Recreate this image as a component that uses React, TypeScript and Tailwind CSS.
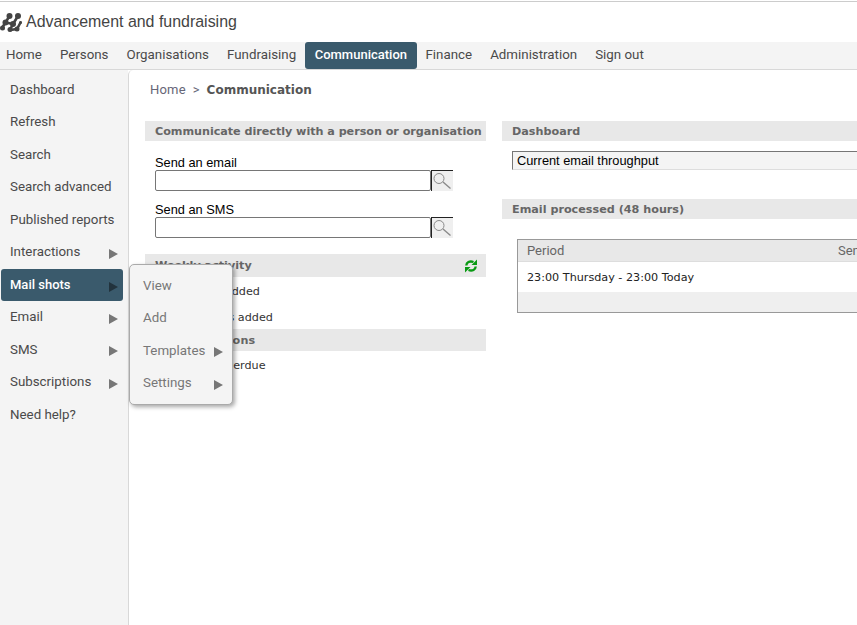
const topNav = ["Home", "Persons", "Organisations", "Fundraising", "Communication", "Finance", "Administration", "Sign out"];

const sideNav = [
  { label: "Dashboard" },
  { label: "Refresh" },
  { label: "Search" },
  { label: "Search advanced" },
  { label: "Published reports" },
  { label: "Interactions", arrow: true },
  { label: "Mail shots", arrow: true, active: true },
  { label: "Email", arrow: true },
  { label: "SMS", arrow: true },
  { label: "Subscriptions", arrow: true },
  { label: "Need help?" },
];

const subMenu = [
  { label: "View" },
  { label: "Add" },
  { label: "Templates", arrow: true },
  { label: "Settings", arrow: true },
];

function Arrow({ className }: { className?: string }) {
  return (
    <svg width="9" height="10" viewBox="0 0 9 10" className={`mt-[3px] ${className ?? ""}`}>
      <path d="M0 0 L9 5 L0 10 Z" fill="currentColor" />
    </svg>
  );
}

function Logo() {
  return (
    <svg width="22" height="20" viewBox="0 0 22 20" className="shrink-0">
      <g stroke="#444444" strokeWidth="2.6" strokeLinecap="round" fill="none">
        <path d="M2 16 L5.5 10.5 L9.5 4" />
        <path d="M10 18 L13 12 L18 4" />
        <path d="M5.5 10.5 L13 12 M10 18 L17 17 L20.5 10.5" />
      </g>
      <g fill="#444444">
        <circle cx="9.5" cy="4" r="3" />
        <circle cx="18" cy="4" r="3" />
        <circle cx="5.5" cy="10.5" r="3" />
        <circle cx="13" cy="12" r="3" />
        <circle cx="20.5" cy="10.5" r="1.5" />
        <circle cx="2.5" cy="16" r="2.5" />
        <circle cx="10" cy="17.5" r="2.5" />
        <circle cx="17" cy="17" r="2.5" />
      </g>
    </svg>
  );
}

function RefreshIcon() {
  return (
    <svg width="12" height="14" viewBox="0 0 12 14" fill="none">
      <g>
        <path d="M1.3 6.5 C1.5 3.5 4.5 1.5 8.5 3" stroke="#0a9a14" strokeWidth="2.4" />
        <path d="M6.5 6 L12 6 L12 0.5 Z" fill="#0a9a14" />
      </g>
      <g transform="rotate(180 6 7)">
        <path d="M1.3 6.5 C1.5 3.5 4.5 1.5 8.5 3" stroke="#0a9a14" strokeWidth="2.4" />
        <path d="M6.5 6 L12 6 L12 0.5 Z" fill="#0a9a14" />
      </g>
    </svg>
  );
}

function SearchField({ label }: { label: string }) {
  return (
    <div className="font-['Liberation_Sans',sans-serif] text-[12.8px] leading-[15px] text-black">
      <div>{label}</div>
      <div className="flex">
        <div className="h-[21px] w-[276px] rounded-[2px] border border-[#767676] bg-white" />
        <div className="h-[21px] w-[22px] border-t border-l border-t-[#222222] border-l-[#222222] bg-[#efefef]">
          <svg width="21" height="20" viewBox="0 0 21 20" fill="none" stroke="#8a8a8a">
            <circle cx="7" cy="7.5" r="5" />
            <path d="M11 11 L18.5 17.5" strokeWidth="1.4" />
          </svg>
        </div>
      </div>
    </div>
  );
}

function SectionHead({ title, className }: { title: string; className?: string }) {
  return (
    <div className={`flex items-center whitespace-nowrap bg-[#e8e8e8] pl-[10px] pt-[2px] font-['DejaVu_Sans',sans-serif] text-[11.2px] font-bold text-[#666666] ${className ?? ""}`}>
      {title}
    </div>
  );
}

function ActivityRow({ text, className }: { text: string; className?: string }) {
  return <div className={`font-['DejaVu_Sans',sans-serif] text-[11.2px] text-[#333333] ${className ?? "pl-[10px]"}`}>{text}</div>;
}

export default function App() {
  return (
    <div className="relative h-[625px] w-[857px] overflow-hidden bg-white font-['Roboto',sans-serif]">
      <div className="mt-px h-px bg-[#cccccc]" />
      <div className="flex h-[40px] items-center gap-[4px] font-['Liberation_Sans',sans-serif] text-[15.95px] text-[#444444]">
        <Logo />
        <span>Advancement and fundraising</span>
      </div>

      <nav className="flex h-[28px] border-b border-[#d8d8d8] bg-[#f4f4f4] text-[13.33px] text-[#4a4a4a]">
        {topNav.map((item) =>
          item === "Communication" ? (
            <a key={item} className="flex h-[27px] items-center rounded-[3px] bg-[#3a5a6c] px-[9.5px] pb-[1px] text-[13px] font-medium text-white">
              {item}
            </a>
          ) : (
            <a key={item} className="flex h-[27px] items-center px-[9px] pb-[1px] first:ml-[-3px]">
              {item}
            </a>
          ),
        )}
      </nav>

      <div className="flex h-[556px]">
        <aside className="h-full w-[128px] shrink-0 bg-[#f4f4f4] pt-[3.75px] text-[13.33px] text-[#4a4a4a]">
          {sideNav.map((item) => (
            <div
              key={item.label}
              className={`ml-[1px] flex h-[32.5px] w-[122px] items-center justify-between whitespace-nowrap rounded-[3px] pl-[9px] pr-[5.5px] ${
                item.active ? "bg-[#3a5a6c] text-[13px] font-medium text-white" : "pb-[0.5px]"
              }`}
            >
              <span>{item.label}</span>
              {item.arrow && <Arrow className={item.active ? "text-[#22333d]" : "text-[#777777]"} />}
            </div>
          ))}
        </aside>

        <main className="min-w-0 flex-1 rounded-tl-[5px] border-l border-[#d8d8d8] bg-white">
          <div className="flex h-[41px] items-center gap-[7px] pb-[1px] pl-[21px] text-[13px] text-[#666677]">
            <span className="tracking-[0.2px]">Home</span>
            <span>&gt;</span>
            <span className="font-['DejaVu_Sans',sans-serif] text-[12px] font-bold text-[#555555]">Communication</span>
          </div>

          <div className="mt-[10px] flex gap-[16px] pl-[16px]">
            <section className="w-[341px] shrink-0">
              <SectionHead title="Communicate directly with a person or organisation" className="h-[20px] tracking-[-0.04px]" />
              <div className="flex flex-col gap-[11px] pl-[10px] pt-[14px]">
                <SearchField label="Send an email" />
                <SearchField label="Send an SMS" />
              </div>
              <div className="mt-[16px] flex h-[23px] items-center justify-between bg-[#e8e8e8] pl-[10px] pr-[9.5px] font-['DejaVu_Sans',sans-serif] text-[11.2px] font-bold text-[#666666]">
                <span className="pt-[2px]">Weekly activity</span>
                <RefreshIcon />
              </div>
              <div className="pt-[6.6px]">
                <ActivityRow text="New person added" />
              </div>
              <div className="pt-[9.2px]">
                <ActivityRow text="Organisations added" className="pl-[12px]" />
              </div>
              <SectionHead title="My interactions" className="mt-[2.6px] h-[22px] tracking-[0.14px]" />
              <div className="pt-[6.6px]">
                <ActivityRow text="Follow-ups overdue" className="pl-[12px]" />
              </div>
            </section>

            <section className="w-[500px] shrink-0">
              <SectionHead title="Dashboard" className="h-[20px]" />
              <div className="ml-[10px] mt-[10px] flex h-[19px] items-center border-b border-l border-t border-b-[#dddddd] border-l-[#767676] border-t-[#767676] bg-[#f4f4f4] pl-[4px] font-['Liberation_Sans',sans-serif] text-[12.8px] text-black">
                Current email throughput
              </div>
              <SectionHead title="Email processed (48 hours)" className="mt-[29px] h-[20px]" />
              <div className="ml-[15px] mt-[20px] border border-r-0 border-[#999999] font-['DejaVu_Sans',sans-serif] text-[11.2px]">
                <div className="flex h-[22px] items-center justify-between border-b border-[#dddddd] bg-[#e8e8e8] pl-[9px] font-['Roboto',sans-serif] text-[13px] text-[#666666]">
                  <span>Period</span>
                  <span className="w-[164px] whitespace-nowrap">Sent</span>
                </div>
                <div className="flex h-[30px] items-center pl-[9px] pt-[2px] text-[#222222]">23:00 Thursday - 23:00 Today</div>
                <div className="h-[20px] bg-[#efefef]" />
              </div>
            </section>
          </div>
        </main>
      </div>

      <div className="absolute left-[129px] top-[264px] h-[141px] w-[104px] rounded-[5px] border border-[#aaaaaa] bg-[#f4f4f4] pl-[13px] pr-[9.5px] pt-[5px] text-[13.33px] text-[#777777] shadow-[2px_2px_4px_rgba(0,0,0,0.35)]">
        {subMenu.map((item) => (
          <div key={item.label} className="flex h-[32.3px] items-center justify-between">
            <span>{item.label}</span>
            {item.arrow && <Arrow className="text-[#777777]" />}
          </div>
        ))}
      </div>
    </div>
  );
}
